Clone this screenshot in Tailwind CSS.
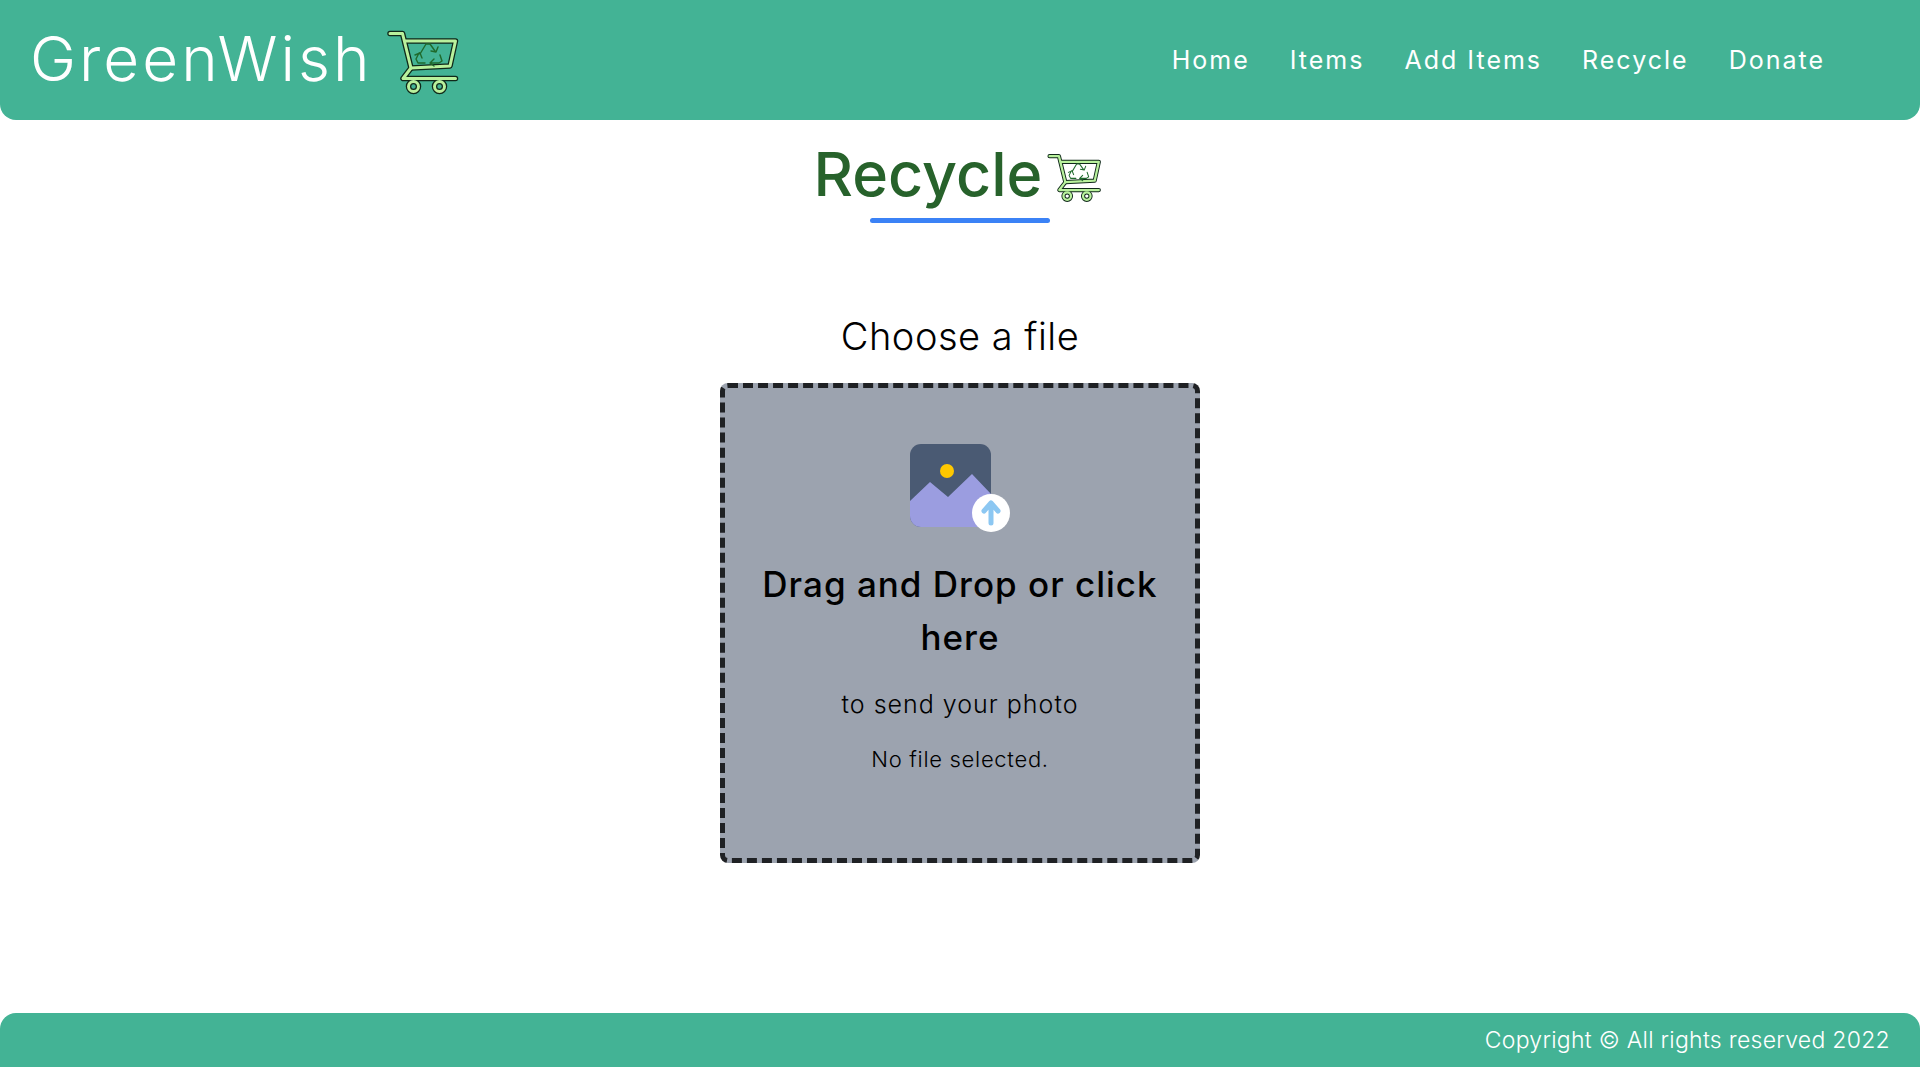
<!DOCTYPE html>
<html lang="en">
<head>
    <meta charset="UTF-8">
    <meta name="viewport" content="width=device-width, initial-scale=1.0">
    <title>GreenWish</title>
    <script src="https://cdn.jsdelivr.net/npm/@tailwindcss/browser@4"></script>
</head>
<body class="bg-white font-['Inter',sans-serif]">

    <!--cart icon, reused in nav and heading-->
    <svg class="hidden">
        <symbol id="cart" viewBox="0 0 85 85">
            <g fill="none" stroke-linecap="round" stroke-linejoin="round">
                <g stroke="#10291a" stroke-width="5.5">
                    <path d="M10 17.5H22.5L31 52L23 62.5H75.5"/>
                    <path d="M25 25H75.5L70 50L31 52"/>
                    <circle cx="33.5" cy="70.5" r="5"/>
                    <circle cx="59.5" cy="70.5" r="5"/>
                </g>
                <g stroke="#b9f19d" stroke-width="3">
                    <path d="M10 17.5H22.5L31 52L23 62.5H75.5"/>
                    <path d="M25 25H75.5L70 50L31 52"/>
                    <circle cx="33.5" cy="70.5" r="5"/>
                    <circle cx="59.5" cy="70.5" r="5"/>
                </g>
                <g stroke="#1f6a2c" stroke-width="1.4">
                    <path d="M40 38L46 28H50L55 35M58 31L56 36L51 35"/>
                    <path d="M60 39L62 45L59 47H50M54 43L50 47L54 50"/>
                    <path d="M45 47H38L36 43L39 37M35 39L40 37L42 42"/>
                </g>
            </g>
        </symbol>
    </svg>

    <div class="min-h-[1067px] flex flex-col">

        <!--nav-->
        <nav class="h-[120px] bg-[#43b395] rounded-b-2xl flex items-center justify-between pl-[30px] pr-[95px] text-white">
            <div class="flex items-center pb-[3px]">
                <span class="text-[62px] font-light tracking-[3px]">GreenWish</span>
                <svg class="w-[85px] h-[85px] ml-[8px]"><use href="#cart"/></svg>
            </div>
            <ul class="flex gap-[40px] pt-[2px] text-[25px] tracking-[2px]">
                <li>Home</li>
                <li>Items</li>
                <li>Add Items</li>
                <li>Recycle</li>
                <li>Donate</li>
            </ul>
        </nav>

        <main class="flex-1 flex flex-col items-center">
            <!--heading-->
            <div class="flex items-center h-[98px] pt-[12px] text-[#27622b]">
                <h1 class="text-[61px] font-[450]">Recycle</h1>
                <svg class="w-[64px] h-[64px]"><use href="#cart"/></svg>
            </div>
            <div class="w-[180px] h-[5px] rounded-full bg-[#3b82f6]"></div>

            <h2 class="mt-[86px] text-[38px] leading-[54px] font-light tracking-[0.5px] text-black">Choose a file</h2>

            <!--upload box-->
            <div class="mt-[20px] w-[480px] h-[480px] bg-[#9ca3af] border-[5px] border-dashed border-[#1f2124] rounded-lg flex flex-col items-center px-8 pt-[56px] text-center text-black">
                <svg class="w-[100px] h-[90px] shrink-0" viewBox="0 0 100 90">
                    <rect x="0" y="0" width="81" height="83" rx="11" fill="#4a5a73"/>
                    <path d="M0 57L20 38L38 53L62 30L81 50V72A11 11 0 0 1 70 83H11A11 11 0 0 1 0 72Z" fill="#9b9de0"/>
                    <circle cx="37" cy="27" r="7" fill="#ffc800"/>
                    <circle cx="81" cy="69" r="19" fill="#fff"/>
                    <path d="M81 79V61M74 67L81 59L88 67" fill="none" stroke="#8cc7f2" stroke-width="5" stroke-linecap="round" stroke-linejoin="round"/>
                </svg>
                <p class="mt-[24px] text-[35px] leading-[53px] font-[450] tracking-[1px]">Drag and Drop or click here</p>
                <p class="mt-[22px] text-[25px] leading-[36px] font-light tracking-[1px]">to send your photo</p>
                <p class="mt-[22px] text-[22px] leading-[30px] font-light tracking-[0.7px]">No file selected.</p>
            </div>
        </main>

        <!--footer-->
        <footer class="h-[54px] bg-[#43b395] rounded-t-2xl flex items-center justify-end pr-[30px] text-white text-[23px] font-light tracking-[0.28px]">
            Copyright © All rights reserved 2022
        </footer>
    </div>

</body>
</html>
